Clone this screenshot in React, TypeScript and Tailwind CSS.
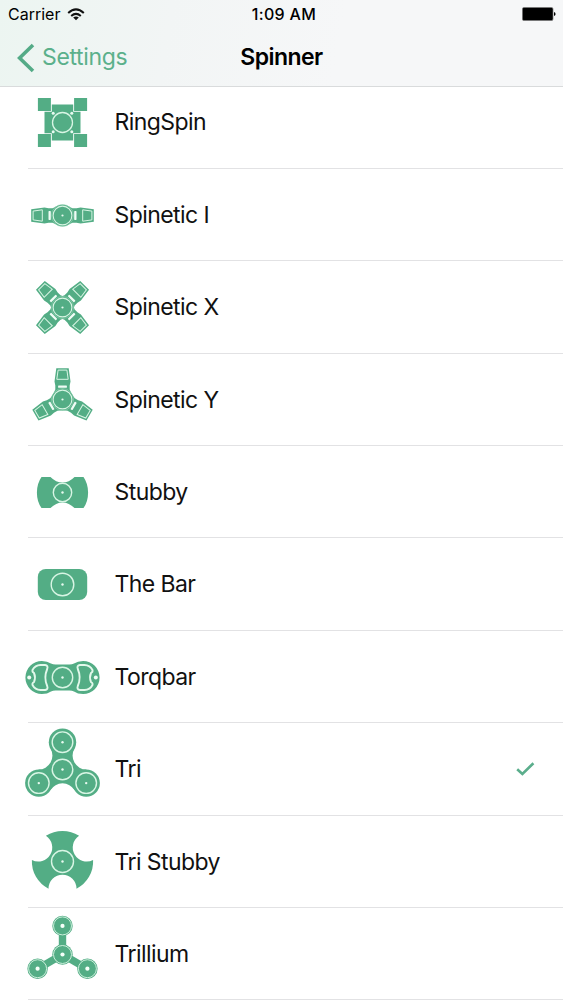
import type { ReactNode } from 'react';

function Hub({ r, cx = 0, cy = 0 }: { r: number; cx?: number; cy?: number }) {
  return (
    <>
      <circle cx={cx} cy={cy} r={r} fill="none" stroke="#d8f5e4" strokeWidth="1.4" />
      <circle cx={cx} cy={cy} r="1.2" fill="#e8faf0" />
    </>
  );
}

function Spinetic({ angles }: { angles: number[] }) {
  return (
    <>
      {angles.map((a) => (
        <g key={a} transform={`rotate(${a})`}>
          <path d="M-6.2 -31.3H6.2L8 -18L7.2 -14V-10L9.5 -5L0 0L-9.5 -5L-7.2 -10V-14L-8 -18Z" />
          <path d="M-4.4 -29.4H4.4L5.7 -20.2H-5.7Z" fill="none" stroke="#d8f5e4" strokeWidth="1" />
          <rect x="-4.4" y="-14" width="8.8" height="2.3" rx="0.6" fill="#f0fcf5" />
        </g>
      ))}
      <circle r="11" stroke="#a9dcc1" strokeWidth="0.5" />
      <circle r="9.4" fill="none" stroke="#d8f5e4" strokeWidth="1.1" />
      <circle r="1.1" fill="#e8faf0" />
    </>
  );
}

const thirds = [0, 120, 240];
const triLobes = [[0, -27.3], [-23.7, 13.6], [23.7, 13.6]];
const trilliumLobes = [[0, 0], [0, -28.6], [-24.9, 14.2], [24.9, 14.2]];

const spinners: { name: string; icon: ReactNode }[] = [
  {
    name: 'RingSpin',
    icon: (
      <>
        <path d="M-10.7 -18H10.7V-10.7H18V10.7H10.7V18H-10.7V10.7H-18V-10.7H-10.7Z" />
        <path d="M-24.6 -24.6h13v13h-13zM11.6 -24.6h13v13h-13zM-24.6 11.6h13v13h-13zM11.6 11.6h13v13h-13z" />
        <circle r="10" fill="none" stroke="#d8f5e4" strokeWidth="1.3" />
        <g fill="#e8faf0">
          <circle cx="-9.3" cy="-9.3" r="1.5" />
          <circle cx="9.3" cy="-9.3" r="1.5" />
          <circle cx="-9.3" cy="9.3" r="1.5" />
          <circle cx="9.3" cy="9.3" r="1.5" />
        </g>
      </>
    ),
  },
  { name: 'Spinetic I', icon: <Spinetic angles={[90, 270]} /> },
  { name: 'Spinetic X', icon: <Spinetic angles={[45, 135, 225, 315]} /> },
  { name: 'Spinetic Y', icon: <Spinetic angles={thirds} /> },
  {
    name: 'Stubby',
    icon: (
      <>
        <path d="M-21 -15.6H-12Q-6.5 -10 0 -10T12 -15.6H21Q25.6 -9 25.6 0T21 15.6H12Q6.5 10 0 10T-12 15.6H-21Q-25.6 9 -25.6 0T-21 -15.6Z" />
        <Hub r={9.2} />
      </>
    ),
  },
  {
    name: 'The Bar',
    icon: (
      <>
        <rect x="-24.7" y="-15.6" width="49.4" height="31.2" rx="8" />
        <Hub r={11.3} />
      </>
    ),
  },
  {
    name: 'Torqbar',
    icon: (
      <>
        <path d="M-20.6 -16.5Q-15 -16.5 -11.5 -14Q-9.5 -12.9 -7 -12.9H7Q9.5 -12.9 11.5 -14Q15 -16.5 20.6 -16.5A16.5 16.5 0 0 1 20.6 16.5Q15 16.5 11.5 14Q9.5 12.9 7 12.9H-7Q-9.5 12.9 -11.5 14Q-15 16.5 -20.6 16.5A16.5 16.5 0 0 1 -20.6 -16.5Z" />
        {[0, 180].map((a) => (
          <g key={a} transform={`rotate(${a})`}>
            <path
              d="M-30 -7.5Q-27.5 -12.3 -22 -12.5H-17.5Q-14 -12 -15.3 -8.5Q-19 0 -15.3 8.5Q-14 12 -17.5 12.5H-22Q-27.5 12.3 -30 7.5Q-30.5 5.5 -28.5 4.5Q-26.5 0 -28.5 -4.5Q-30.5 -5.5 -30 -7.5Z"
              fill="none"
              stroke="#e3f8eb"
              strokeWidth="1.9"
            />
            <circle cx="-33.3" r="2" fill="#f0fcf5" />
          </g>
        ))}
        <Hub r={10.2} />
      </>
    ),
  },
  {
    name: 'Tri',
    icon: (
      <>
        {thirds.map((a) => (
          <path key={a} transform={`rotate(${a})`} d="M-23.7 13.5L-12 20.6A14 14 0 0 1 12 20.6L23.7 13.5L0 -1Z" />
        ))}
        {triLobes.map(([x, y]) => (
          <g key={x}>
            <circle cx={x} cy={y} r="13.7" />
            <Hub cx={x} cy={y} r={10.3} />
          </g>
        ))}
        <Hub r={10.3} />
      </>
    ),
  },
  {
    name: 'Tri Stubby',
    icon: (
      <>
        <path d="M-16.6 -25.7A30.6 30.6 0 0 1 16.6 -25.7A14 14 0 0 0 30.6 -1.5A30.6 30.6 0 0 1 14 27.2A14 14 0 0 0 -14 27.2A30.6 30.6 0 0 1 -30.6 -1.5A14 14 0 0 0 -16.6 -25.7Z" />
        <Hub r={11} />
      </>
    ),
  },
  {
    name: 'Trillium',
    icon: (
      <>
        {thirds.map((a) => (
          <rect key={a} transform={`rotate(${a})`} x="-3.7" y="-26" width="7.4" height="26" />
        ))}
        {trilliumLobes.map(([x, y]) => (
          <g key={`${x},${y}`}>
            <circle cx={x} cy={y} r="10.2" />
            <circle cx={x} cy={y} r="9" fill="none" stroke="#d8f5e4" strokeWidth="0.9" />
            <circle cx={x} cy={y} r="2.1" fill="#f5fff9" />
          </g>
        ))}
      </>
    ),
  },
];

const selected = 'Tri';

function StatusBar() {
  return (
    <div className="grid h-[28px] grid-cols-3 items-center pr-[7px] pl-[8px] text-[16px]">
      <div className="flex items-center gap-[7px]">
        <span>Carrier</span>
        <svg width="18" height="13" viewBox="0 0 18 13" fill="none" stroke="#111" strokeWidth="2">
          <path d="M1.2 5Q9 -2.2 16.8 5" />
          <path d="M4.2 8Q9 3.8 13.8 8" />
          <path d="M9 12.2L6.2 9.5Q9 7.4 11.8 9.5Z" fill="#111" stroke="none" />
        </svg>
      </div>
      <div className="pl-[4px] text-center font-medium tracking-[0.02em] whitespace-nowrap">1:09 AM</div>
      <svg className="justify-self-end" width="34" height="14" viewBox="0 0 34 14">
        <rect x="0.4" y="0.4" width="30.6" height="13.2" rx="1.6" fill="#000" stroke="#777" strokeWidth="0.7" />
        <path d="M32 5Q33.6 5.3 33.6 7T32 9Z" fill="#000" />
      </svg>
    </div>
  );
}

function NavBar() {
  return (
    <div className="grid flex-1 grid-cols-3 items-center pt-px text-[23px]">
      <button className="flex items-center gap-[7px] pl-[17px] text-[#5bb08b]">
        <svg width="18" height="30" viewBox="0 0 18 30" fill="none" stroke="#54ab87" strokeWidth="3.6">
          <path d="M16 2L2.6 15L16 28" />
        </svg>
        <span className="tracking-[-0.015em]">Settings</span>
      </button>
      <h1 className="text-center font-semibold tracking-[-0.024em]">Spinner</h1>
    </div>
  );
}

export default function App() {
  return (
    <div className="flex h-[1000px] w-[563px] flex-col overflow-hidden bg-white font-[Inter,sans-serif] text-[#111]">
      <header className="z-10 flex h-[87px] shrink-0 flex-col border-b border-[#d9dbdc] bg-[linear-gradient(100deg,#ecf5f1_0%,#f2f5f5_30%,#f6f7f8_60%)] text-black">
        <StatusBar />
        <NavBar />
      </header>

      <ul className="-mt-[10.5px]">
        {spinners.map(({ name, icon }) => (
          <li key={name} className="h-[92.4px] pl-[28px]">
            <div className="flex h-full items-center border-b border-[#e2e2e4] pr-[28px]">
              <svg
                className="-ml-[6px] shrink-0 overflow-visible"
                width="80"
                height="80"
                viewBox="-40.5 -40.5 80 80"
                fill="#53ad85"
              >
                {icon}
              </svg>
              <span className="flex-1 pt-px pl-[12.5px] text-[23px] tracking-[-0.025em]">{name}</span>
              {name === selected && (
                <svg width="19" height="14" viewBox="0 0 19 14" fill="none" stroke="#5bae8c" strokeWidth="2.6">
                  <path d="M1.2 7.2L6.4 12L17.4 1.2" />
                </svg>
              )}
            </div>
          </li>
        ))}
      </ul>
    </div>
  );
}
